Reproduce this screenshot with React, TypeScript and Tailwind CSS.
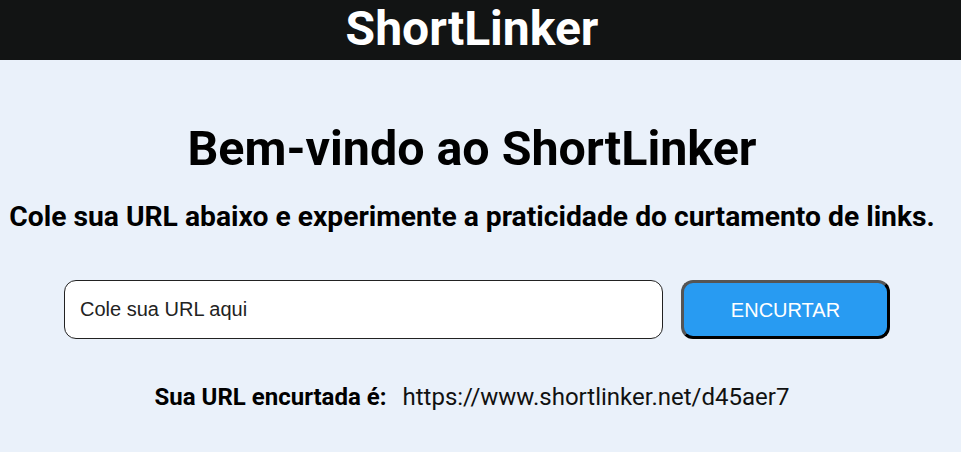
import React from "react";

export default function App() {
  return (
    <div className="min-h-[452px] bg-[#eaf1fa] font-['Roboto',sans-serif]">
      <header className="h-[60px] bg-[#121414] flex items-center justify-center pr-[17px] pb-[2px]">
        <h2 className="text-white font-bold text-[48px] leading-none">ShortLinker</h2>
      </header>
      <main className="w-[944px] flex flex-col items-center">
        <h1 className="mt-[65px] text-[48.4px] leading-[48px] font-bold text-black">Bem-vindo ao ShortLinker</h1>
        <p className="mt-[30px] text-[28.25px] leading-[28px] font-bold text-black">
          Cole sua URL abaixo e experimente a praticidade do curtamento de links.
        </p>
        <div className="mt-[49px] flex gap-[18px] pl-[10px]">
          <input
            className="w-[599px] h-[59px] bg-white border border-[#222] rounded-[12px] px-[15px] text-[20px] text-[#222] font-['Liberation_Sans',sans-serif] placeholder:text-[#222] outline-none"
            placeholder="Cole sua URL aqui"
          />
          <button className="w-[209px] h-[59px] bg-[#289bf2] text-white text-[20px] font-['Liberation_Sans',sans-serif] rounded-[12px] border-[3px] border-t-[#555] border-l-[#555] border-r-black border-b-black">
            ENCURTAR
          </button>
        </div>
        <div className="mt-[42px] flex items-center gap-[16px] text-[24px] leading-[32px] text-black">
          <span className="font-bold">Sua URL encurtada é:</span>
          <span className="text-[#111]">https://www.shortlinker.net/d45aer7</span>
        </div>
      </main>
    </div>
  );
}
